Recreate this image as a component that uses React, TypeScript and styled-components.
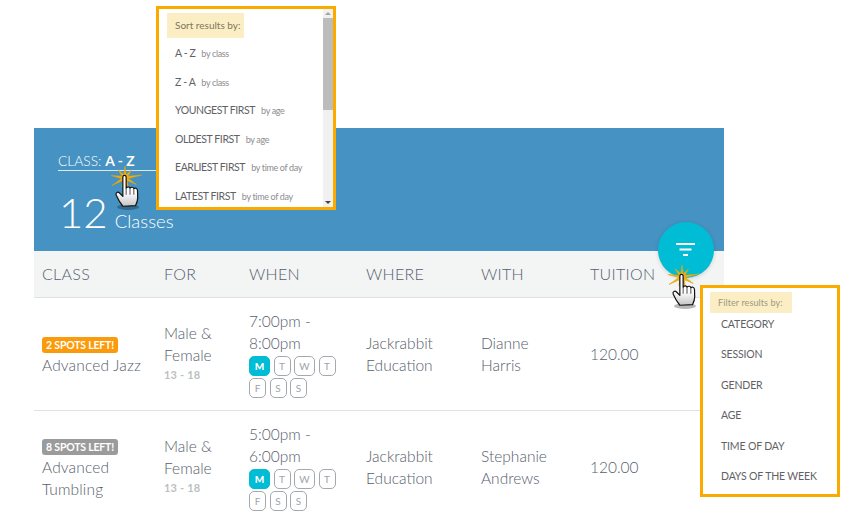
import React from 'react';
import styled, { createGlobalStyle } from 'styled-components';

const GlobalStyle = createGlobalStyle`
  html, body {
    margin: 0;
    padding: 0;
    background: #fff;
    font-family: Lato, "Open Sans", sans-serif;
    color: #5b6570;
  }
  * { box-sizing: border-box; }
`;

const Page = styled.div`
  height: 517px;
  width: 848px;
  overflow: hidden;
  padding: 128px 0 0 34px;
`;

const Panel = styled.div`
  position: relative;
  width: 690px;
`;

const Banner = styled.div`
  height: 123px;
  background: #4692c2;
  color: #fff;
  padding: 24px 0 0 24px;
`;

const SortLabel = styled.div`
  width: 100px;
  height: 19px;
  font-size: 13.8px;
  font-weight: 300;
  line-height: 17px;
  border-bottom: 1px solid #dfe8ee;
  white-space: nowrap;
  b { font-weight: 700; }
`;

const Count = styled.div`
  display: flex;
  align-items: baseline;
  margin: 16px 0 0 1px;
  font-weight: 300;
`;

const CountNum = styled.span`
  font-size: 42px;
  line-height: 50px;
`;

const CountText = styled.span`
  font-size: 18.5px;
  margin-left: 7px;
`;

const Row = styled.div<{ $head?: boolean; $height: number }>`
  display: grid;
  grid-template-columns: 122px 85px 117px 115px 109px 1fr;
  align-items: center;
  height: ${(p) => p.$height}px;
  padding-left: 8px;
  font-weight: 300;
  font-size: 15.5px;
  line-height: 22px;
  color: #56606c;
  background: ${(p) => (p.$head ? '#f3f5f5' : '#fff')};
  border-bottom: 1px solid #dfe2e3;
`;

const HeadCell = styled.div`
  font-size: 16px;
  letter-spacing: 0.3px;
`;

const ClassCell = styled.div`
  padding-top: 5px;
`;

const ForCell = styled.div`
  margin-bottom: 2px;
`;

const Badge = styled.div<{ $color: string }>`
  width: 76px;
  height: 16px;
  border-radius: 3px;
  background: ${(p) => p.$color};
  color: #fff;
  font-size: 10.5px;
  font-weight: 700;
  line-height: 16px;
  text-align: center;
  white-space: nowrap;
  letter-spacing: -0.2px;
`;

const ClassName = styled.div`
  margin-top: 1px;
  letter-spacing: 0.15px;
`;

const Ages = styled.div`
  font-size: 11px;
  line-height: 18px;
  font-weight: 700;
  color: #bcbfc2;
  letter-spacing: 0.2px;
`;

const Days = styled.div`
  display: flex;
  flex-wrap: wrap;
  gap: 2px 3.5px;
  width: 92px;
  margin-top: 2px;
`;

const Day = styled.span<{ $on?: boolean; $wide?: boolean }>`
  width: ${(p) => (p.$wide ? 21 : 17)}px;
  height: 20px;
  border-radius: 5px;
  border: 1px solid ${(p) => (p.$on ? '#00bcd4' : '#a5a9ad')};
  background: ${(p) => (p.$on ? '#00bcd4' : '#fff')};
  color: ${(p) => (p.$on ? '#fff' : '#a0a4a8')};
  font-size: 10px;
  font-weight: ${(p) => (p.$on ? 900 : 400)};
  line-height: 18px;
  text-align: center;
`;

const Fab = styled.div`
  position: absolute;
  left: 624px;
  top: 94px;
  width: 56px;
  height: 56px;
  border-radius: 50%;
  background: #00bcd4;
  box-shadow: 0 1px 4px rgba(0, 0, 0, 0.15);
  display: flex;
  align-items: center;
  justify-content: center;
`;

const Popup = styled.div`
  position: absolute;
  background: #fff;
  border: 3px solid #fbaa00;
`;

const SortPopup = styled(Popup)`
  left: 122px;
  top: -122px;
  width: 180px;
  height: 204px;
  padding: 4px 0 0 8px;
  overflow: hidden;
`;

const FilterPopup = styled(Popup)`
  left: 666px;
  top: 157px;
  width: 140px;
  height: 212px;
  padding: 2px 0 0 7px;
`;

const SortTitle = styled.div`
  display: inline-block;
  background: #fbeec4;
  color: #7d7660;
  font-size: 10px;
  line-height: 25px;
  height: 25px;
  padding: 0 4px 0 8px;
  white-space: nowrap;
`;

const FilterTitle = styled.div`
  display: inline-block;
  background: #fbeec4;
  color: #a09880;
  font-size: 9px;
  line-height: 21px;
  height: 21px;
  padding: 0 9px 0 8px;
  letter-spacing: 0.1px;
  white-space: nowrap;
`;

const SortItem = styled.div`
  height: 28.6px;
  line-height: 28.6px;
  padding-left: 8px;
  font-size: 10.5px;
  letter-spacing: -0.4px;
  color: #5f6265;
  white-space: nowrap;
  small {
    font-size: 9px;
    letter-spacing: -0.35px;
    color: #8b8d90;
    margin-left: 6px;
  }
`;

const SortList = styled.div`
  margin-top: 1px;
`;

const FilterList = styled.div`
  padding: 0 0 0 11px;
  margin-top: -4px;
`;

const FilterItem = styled.div`
  height: 30.4px;
  line-height: 30.4px;
  font-size: 10.5px;
  letter-spacing: -0.15px;
  color: #5f6265;
  white-space: nowrap;
`;

const Scrollbar = styled.div`
  position: absolute;
  top: 0;
  right: 0;
  bottom: 0;
  width: 10px;
  background: #f1f1f1;
  display: flex;
  flex-direction: column;
  align-items: center;
`;

const Thumb = styled.div`
  width: 10px;
  height: 92px;
  background: #bcbcbc;
`;

const Arrow = styled.div<{ $down?: boolean; $dark?: boolean }>`
  height: 9px;
  flex: none;
  display: flex;
  align-items: center;
  justify-content: center;
  margin-top: ${(p) => (p.$down ? 'auto' : 0)};
  &::after {
    content: '';
    border-left: 3px solid transparent;
    border-right: 3px solid transparent;
    ${(p) => (p.$down ? 'border-top' : 'border-bottom')}: 3px solid ${(p) => (p.$dark ? '#444' : '#a3a3a3')};
  }
`;

const CursorWrap = styled.div<{ $x: number; $y: number }>`
  position: absolute;
  left: ${(p) => p.$x}px;
  top: ${(p) => p.$y}px;
  width: 36px;
  height: 46px;
`;

// length of each ray of the click spark, clockwise from the top
const rays = [12, 5, 10, 6, 17, 6, 13, 5, 10, 6, 9, 5, 15, 6, 14, 6, 11, 5];

const sparkPoints = rays
  .map((len, i) => {
    const a = (i / rays.length) * Math.PI * 2;
    const r = i % 2 === 0 ? len : 3.4;
    return `${(16 + Math.sin(a) * r).toFixed(1)},${(12 - Math.cos(a) * r).toFixed(1)}`;
  })
  .join(' ');

const ClickCursor: React.FC<{ x: number; y: number }> = ({ x, y }) => (
  <CursorWrap $x={x} $y={y}>
    <svg width="36" height="46" viewBox="0 0 36 46">
      <defs>
        <linearGradient id="handFill" x1="0" y1="0" x2="0" y2="1">
          <stop offset="0.55" stopColor="#fff" />
          <stop offset="1" stopColor="#c4c4c4" />
        </linearGradient>
      </defs>
      <polygon points={sparkPoints} fill="#f4b20f" stroke="#dda312" strokeWidth="0.6" />
      <ellipse cx="19" cy="41" rx="11" ry="3" fill="rgba(0,0,0,0.28)" />
      <g transform="translate(15.500 10) scale(1.1) translate(-15.500 -10)">
        <path
          d="M14 11 C14 9 17 9 17 11 L17 21 C18 19.500 20 19.500 20.500 21 C21.500 19.800 23.500 20 24 21.500 C25 20.600 27 21 27.300 23 L27.500 30 C27.500 33 26.500 35 25.500 37 L14 37.500 C12 35 9.500 31 8 27.500 C7 25 9.500 24 11 25.500 L14 28.500 Z"
          fill="url(#handFill)"
          stroke="#111"
          strokeWidth="1.1"
          strokeLinejoin="round"
        />
        <path d="M17 21 V27 M20.500 21 V27 M24 21.500 V27" stroke="#333" strokeWidth="0.8" />
      </g>
    </svg>
  </CursorWrap>
);

const FilterIcon = () => (
  <svg width="20" height="14" viewBox="0 0 20 14">
    <path d="M0 1 H19 M3.500 6.500 H15.500 M7 12 H12" stroke="#fff" strokeWidth="2" fill="none" />
  </svg>
);

const DayPicker = () => (
  <Days>
    <Day $on $wide>M</Day>
    <Day>T</Day>
    <Day $wide>W</Day>
    <Day>T</Day>
    <Day>F</Day>
    <Day>S</Day>
    <Day>S</Day>
  </Days>
);

const sortOptions = [
  ['A - Z', 'by class'],
  ['Z - A', 'by class'],
  ['YOUNGEST FIRST', 'by age'],
  ['OLDEST FIRST', 'by age'],
  ['EARLIEST FIRST', 'by time of day'],
  ['LATEST FIRST', 'by time of day'],
];

const filterOptions = ['CATEGORY', 'SESSION', 'GENDER', 'AGE', 'TIME OF DAY', 'DAYS OF THE WEEK'];

const classes = [
  { spots: '2 SPOTS LEFT!', color: '#fb9a0a', name: 'Advanced Jazz', time: ['7:00pm -', '8:00pm'], teacher: ['Dianne', 'Harris'], height: 113 },
  { spots: '8 SPOTS LEFT!', color: '#9b9b9b', name: 'Advanced Tumbling', time: ['5:00pm -', '6:00pm'], teacher: ['Stephanie', 'Andrews'], height: 113 },
];

export default function App() {
  return (
    <Page>
      <GlobalStyle />
      <Panel>
        <Banner>
          <SortLabel>
            CLASS: <b>A - Z</b>
          </SortLabel>
          <Count>
            <CountNum>12</CountNum>
            <CountText>Classes</CountText>
          </Count>
        </Banner>
        <Row $head $height={47}>
          <HeadCell>CLASS</HeadCell>
          <HeadCell>FOR</HeadCell>
          <HeadCell>WHEN</HeadCell>
          <HeadCell>WHERE</HeadCell>
          <HeadCell>WITH</HeadCell>
          <HeadCell>TUITION</HeadCell>
        </Row>
        {classes.map((c) => (
          <Row key={c.name} $height={c.height}>
            <ClassCell>
              <Badge $color={c.color}>{c.spots}</Badge>
              <ClassName>{c.name}</ClassName>
            </ClassCell>
            <ForCell>
              Male &amp;
              <br />
              Female
              <Ages>13 - 18</Ages>
            </ForCell>
            <div>
              {c.time[0]}
              <br />
              {c.time[1]}
              <DayPicker />
            </div>
            <div>
              Jackrabbit
              <br />
              Education
            </div>
            <div>
              {c.teacher[0]}
              <br />
              {c.teacher[1]}
            </div>
            <div>120.00</div>
          </Row>
        ))}
        <Fab>
          <FilterIcon />
        </Fab>
        <SortPopup>
          <SortTitle>Sort results by:</SortTitle>
          <SortList>
            {sortOptions.map(([label, hint]) => (
              <SortItem key={label}>
                {label}
                <small>{hint}</small>
              </SortItem>
            ))}
          </SortList>
          <Scrollbar>
            <Arrow />
            <Thumb />
            <Arrow $down $dark />
          </Scrollbar>
        </SortPopup>
        <FilterPopup>
          <FilterTitle>Filter results by:</FilterTitle>
          <FilterList>
            {filterOptions.map((o) => (
              <FilterItem key={o}>{o}</FilterItem>
            ))}
          </FilterList>
        </FilterPopup>
        <ClickCursor x={75} y={38} />
        <ClickCursor x={632} y={137} />
      </Panel>
    </Page>
  );
}
